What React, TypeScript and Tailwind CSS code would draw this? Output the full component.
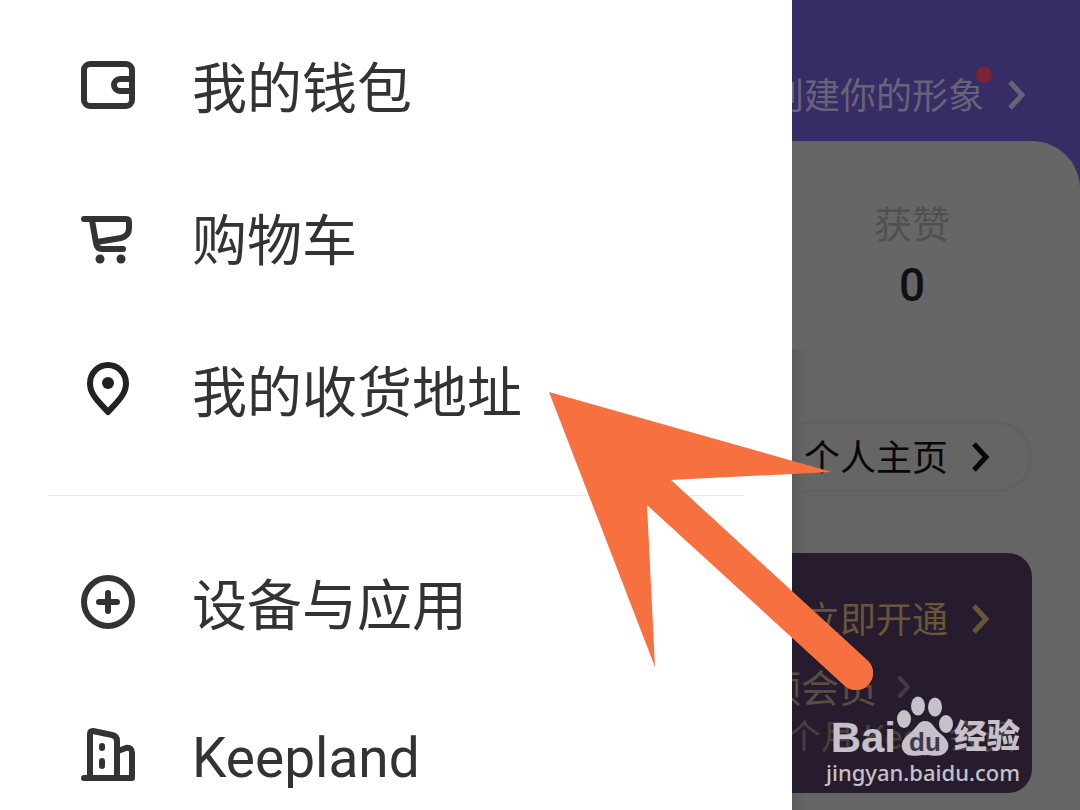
import type { ReactNode } from 'react';

interface MenuItem {
  label: string;
  icon: ReactNode;
}

const iconClass = 'w-18 h-18 shrink-0 fill-none stroke-[#333333] stroke-[6] [stroke-linecap:round] [stroke-linejoin:round]';

function WalletIcon() {
  return (
    <svg viewBox="0 0 72 72" className={iconClass} aria-hidden="true">
      <rect x="12" y="15" width="48" height="42" rx="6" />
      <path d="M59 30H48a6 6 0 0 0 0 12H59" />
    </svg>
  );
}

function CartIcon() {
  return (
    <svg viewBox="0 0 72 72" className={iconClass} aria-hidden="true">
      <path d="M12 18H54Q57 18 57 21V27Q57 35 49 37L25 41" />
      <path d="M20 19L24 42Q25 48 30 48H51" />
      <circle cx="28" cy="58" r="4.5" className="fill-[#333333] stroke-none" />
      <circle cx="49" cy="58" r="4.5" className="fill-[#333333] stroke-none" />
    </svg>
  );
}

function PinIcon() {
  return (
    <svg viewBox="0 0 72 72" className={iconClass} aria-hidden="true">
      <path d="M36 59C28 50 18 42 18 30.500A18 18.500 0 0 1 54 30.500C54 42 44 50 36 59Z" className="stroke-[#222222]" />
      <circle cx="36" cy="30" r="6" className="fill-[#222222] stroke-none" />
    </svg>
  );
}

function PlusCircleIcon() {
  return (
    <svg viewBox="0 0 72 72" className={iconClass} aria-hidden="true">
      <circle cx="36" cy="36" r="24" />
      <path d="M27 36H45M36 27V45" />
    </svg>
  );
}

function BuildingIcon() {
  return (
    <svg viewBox="0 0 72 72" className={iconClass} aria-hidden="true">
      <path d="M12 60H60M18 59V16Q18 13 21 13L40 17Q45 18 45 23V59M46 33L54 30Q60 29 60 35V59" />
      <path d="M30 28V30M30 43V48" />
    </svg>
  );
}

const primaryItems: MenuItem[] = [
  { label: '我的钱包', icon: <WalletIcon /> },
  { label: '购物车', icon: <CartIcon /> },
  { label: '我的收货地址', icon: <PinIcon /> },
];

const secondaryItems: MenuItem[] = [
  { label: '设备与应用', icon: <PlusCircleIcon /> },
  { label: 'Keepland', icon: <BuildingIcon /> },
];

function MenuList({ items }: { items: MenuItem[] }) {
  return (
    <ul>
      {items.map((item) => (
        <li key={item.label}>
          <button className="flex w-full h-[152px] items-center gap-12 pl-18 text-left text-[55px] leading-[64px] text-[#333333]">
            {item.icon}
            <span className="whitespace-nowrap pt-2">{item.label}</span>
          </button>
        </li>
      ))}
    </ul>
  );
}

function Chevron({ className }: { className: string }) {
  return (
    <svg viewBox="0 0 18 30" className={`shrink-0 fill-none stroke-current ${className}`} aria-hidden="true">
      <path d="M2 2L14 15L2 28" strokeWidth="5" />
    </svg>
  );
}

function ProfilePage() {
  return (
    <main className="min-w-0 overflow-hidden bg-[#656565] shadow-[inset_12px_0_12px_-8px_rgba(0,0,0,0.12)]">
      <div className="bg-[#372c66]">
        <a href="#avatar" className="flex h-[141px] items-center justify-end gap-6 pr-[54px] pt-12 text-[36px] leading-[44px] text-[#686478]">
          <span className="relative whitespace-nowrap pt-1">
            创建你的形象
            <span className="absolute -right-2 -top-1 h-4 w-4 rounded-full bg-[#7c2430]" />
          </span>
          <Chevron className="w-[18px] h-[30px]" />
        </a>
        <section className="flex h-[208px] flex-col items-center rounded-tr-[48px] bg-[#666666] pr-12 pt-[60px]">
          <div className="text-[38px] leading-[48px] text-[#505050]">获赞</div>
          <div className="pt-2 text-[46px] leading-[56px] font-medium text-[#111111]">0</div>
        </section>
      </div>

      <div className="flex justify-end pr-12 pt-[73px]">
        <button className="flex h-[70px] shrink-0 items-center gap-6 rounded-full border-2 border-[#606060] pl-10 pr-10 text-[36px] leading-[44px] text-[#080808]">
          <span className="whitespace-nowrap pt-1">个人主页</span>
          <Chevron className="w-[18px] h-[30px]" />
        </button>
      </div>

      <section className="mr-12 mt-[61px] flex h-[240px] flex-col items-end overflow-hidden rounded-r-[24px] bg-[#261c2e] pt-10">
        <button className="flex items-center gap-6 pr-[42px] text-[36px] leading-[48px] text-[#69553a]">
          <span className="whitespace-nowrap pt-1">立即开通</span>
          <Chevron className="w-[18px] h-[30px]" />
        </button>
        <button className="flex items-center gap-5 pr-[121px] pt-4 text-[38px] leading-[48px] text-[#5b4d42]">
          <span className="whitespace-nowrap pt-1">领会员</span>
          <Chevron className="w-[14px] h-[24px] text-[#453b46]" />
        </button>
        <p className="whitespace-nowrap pr-4 text-[34px] leading-[48px] text-[#4a3f3c]">个月 Keep 会员</p>
      </section>
    </main>
  );
}

function PointerArrow() {
  return (
    <svg viewBox="0 0 330 310" className="absolute left-[549px] top-[391px] w-[330px] h-[310px] pointer-events-none" aria-hidden="true">
      <path d="M0 1L283 81L121 89L319 270A17 17 0 0 1 296 295L98 114L106 276Z" fill="#f67040" />
      <path d="M110 101L307 282" stroke="#f67040" strokeWidth="34" strokeLinecap="round" />
    </svg>
  );
}

function Watermark() {
  return (
    <div className="absolute bottom-6 right-[60px] flex flex-col items-end text-[#c5c0c9]">
      <div className="flex items-end">
        <span className="font-['Liberation_Sans'] text-[42px] leading-[40px] font-bold">Bai</span>
        <span className="relative">
          <svg viewBox="0 0 58 62" className="w-[58px] h-[62px]" fill="currentColor" aria-hidden="true">
            <ellipse cx="8" cy="23" rx="7" ry="9" />
            <ellipse cx="22" cy="10" rx="7" ry="9.500" />
            <ellipse cx="39" cy="11" rx="7" ry="9.500" />
            <ellipse cx="50" cy="28" rx="7" ry="9" />
            <path d="M29 25C22 25 20 33 13 38C5 44 4 51 8 56C12 62 22 59 29 59C37 59 45 62 50 56C55 50 52 44 45 38C38 33 37 25 29 25Z" />
          </svg>
          <span className="absolute inset-x-0 bottom-0 text-center font-['Liberation_Sans'] text-[26px] leading-[32px] font-bold text-[#41384a]">du</span>
        </span>
        <span className="text-[33px] leading-[42px] font-black">经验</span>
      </div>
      <span className="font-['Noto_Sans'] text-[22px] leading-[28px] font-medium">jingyan.baidu.com</span>
    </div>
  );
}

export default function App() {
  return (
    <div className="relative grid h-screen grid-cols-[11fr_4fr] overflow-hidden bg-white font-[Roboto,'Noto_Sans_CJK_SC',sans-serif]">
      <nav className="min-w-0 bg-white pt-[9px]">
        <MenuList items={primaryItems} />
        <hr className="mx-12 my-[30px] border-[#ebebeb]" />
        <MenuList items={secondaryItems} />
      </nav>
      <ProfilePage />
      <PointerArrow />
      <Watermark />
    </div>
  );
}
